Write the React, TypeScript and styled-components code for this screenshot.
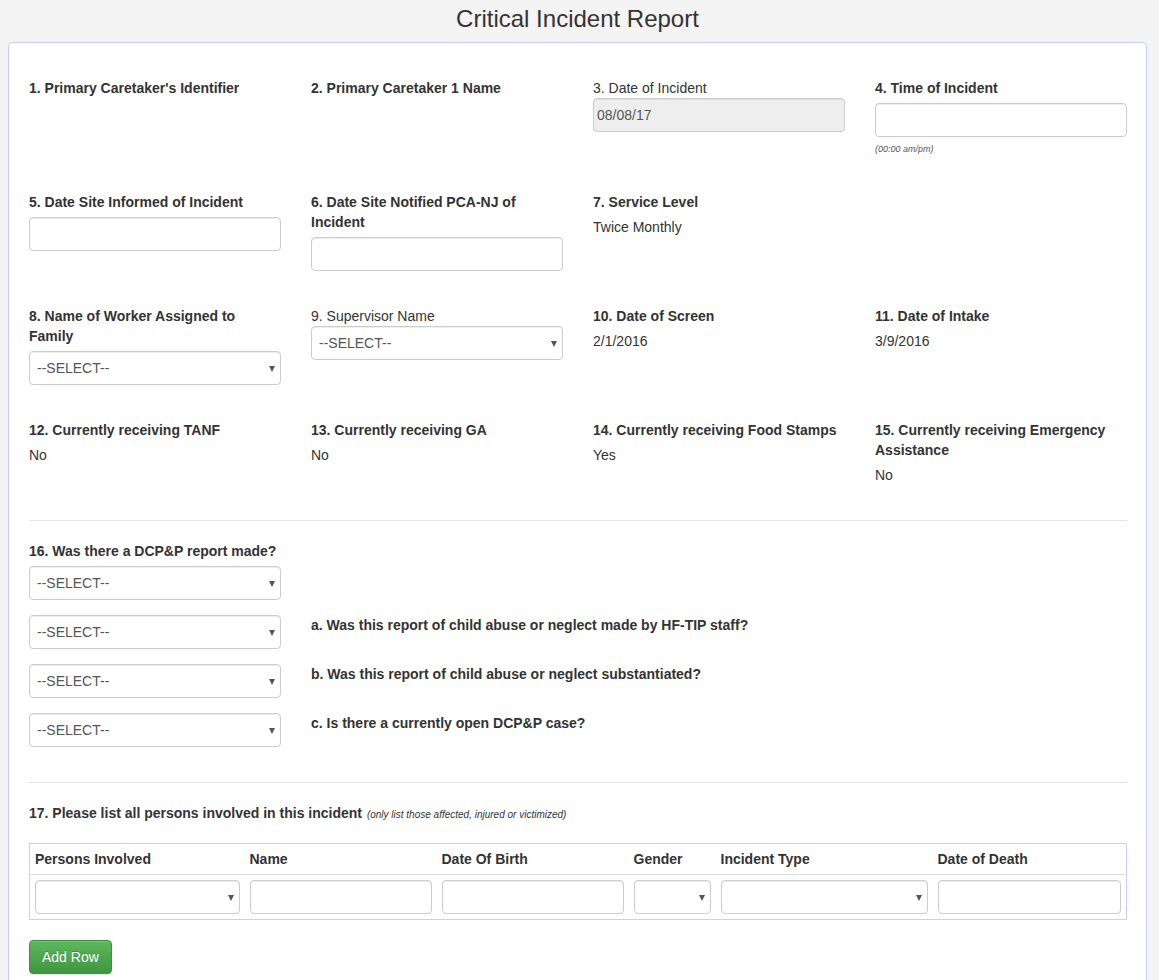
import React from "react";
import styled, { createGlobalStyle } from "styled-components";

const Global = createGlobalStyle`
  html, body { margin: 0; padding: 0; background: #f4f4f4; }
  body { font-family: "Liberation Sans", Arial, sans-serif; font-size: 14px; line-height: 20px; color: #333; }
  * { box-sizing: border-box; }
`;

const Title = styled.h1`
  margin: 0 12px 10px 8px;
  padding-top: 6px;
  font-size: 24px;
  line-height: 26px;
  font-weight: normal;
  text-align: center;
  color: #333;
`;

const Card = styled.div`
  margin: 0 12px 0 8px;
  background: #fff;
  border: 1px solid #ccccff;
  border-radius: 4px;
  padding: 35px 19px 40px 20px;
`;

const Grid = styled.div<{ $gap?: number }>`
  display: grid;
  grid-template-columns: repeat(4, 252px);
  column-gap: 30px;
  row-gap: ${(p) => p.$gap ?? 35}px;
  align-items: start;
`;

const Field = styled.div`
  display: flex;
  flex-direction: column;
  min-height: 79px;
`;

const Label = styled.label<{ $plain?: boolean; $flush?: boolean }>`
  display: block;
  font-weight: ${(p) => (p.$plain ? "normal" : "bold")};
  margin-bottom: ${(p) => (p.$plain || p.$flush ? 0 : 5)}px;
  height: ${(p) => (p.$flush ? "20px" : "auto")};
`;

const Value = styled.div``;

const Input = styled.input<{ $readOnlyStyle?: boolean }>`
  display: block;
  width: 100%;
  height: 34px;
  padding: 6px 3px;
  font-family: inherit;
  font-size: 14px;
  color: #555;
  background: ${(p) => (p.$readOnlyStyle ? "#eee" : "#fff")};
  border: 1px solid #ccc;
  border-radius: 4px;
  box-shadow: inset 0 1px 1px rgba(0, 0, 0, 0.075);
  outline: none;
`;

const SelectWrap = styled.div`
  position: relative;
  width: 100%;
  &::after {
    content: "";
    position: absolute;
    right: 6px;
    top: 15px;
    border-left: 3.5px solid transparent;
    border-right: 3.5px solid transparent;
    border-top: 6px solid #555;
    pointer-events: none;
  }
`;

const Select = styled.select`
  display: block;
  width: 100%;
  height: 34px;
  padding: 6px 20px 6px 7px;
  font-family: inherit;
  font-size: 14px;
  color: #555;
  background: #fff;
  border: 1px solid #ccc;
  border-radius: 4px;
  box-shadow: inset 0 1px 1px rgba(0, 0, 0, 0.075);
  appearance: none;
  -webkit-appearance: none;
  outline: none;
`;

const Help = styled.div`
  margin-top: 5px;
  font-size: 9px;
  line-height: 15px;
  font-style: italic;
  color: #555;
`;

const Rule = styled.hr<{ $top?: number }>`
  border: 0;
  border-top: 1px solid #e4e4e4;
  margin: ${(p) => p.$top ?? 20}px 0 20px;
  height: 0;
`;

const Note = styled.span`
  font-weight: normal;
  font-style: italic;
  font-size: 10px;
  line-height: 10px;
  color: #333;
  margin-left: 1px;
`;

const Spacer = styled.div`
  grid-column: span 3;
`;

const QuestionLabel = styled.div`
  grid-column: span 3;
  font-weight: bold;
  line-height: 20px;
`;

const Table = styled.table`
  width: 100%;
  margin-top: 20px;
  border-collapse: collapse;
  table-layout: fixed;
  border: 1px solid #ccccff;
`;

const Th = styled.th<{ $w?: number }>`
  width: ${(p) => (p.$w ? `${p.$w}px` : "auto")};
  text-align: left;
  padding: 5px;
  font-weight: bold;
  line-height: 20px;
  border-bottom: 1px solid #ddd;
`;

const Td = styled.td`
  padding: 5px;
  vertical-align: top;
`;

const Button = styled.button`
  margin-top: 20px;
  height: 34px;
  padding: 6px 12px;
  font-family: inherit;
  font-size: 14px;
  color: #fff;
  background: linear-gradient(to bottom, #5cb85c 0%, #419641 100%);
  border: 1px solid #3e8f3e;
  border-radius: 4px;
  text-shadow: 0 -1px 0 rgba(0, 0, 0, 0.2);
  box-shadow: inset 0 1px 0 rgba(255, 255, 255, 0.15), 0 1px 1px rgba(0, 0, 0, 0.075);
`;

const Sel = ({ text = "--SELECT--" }: { text?: string }) => (
  <SelectWrap>
    <Select defaultValue="">
      <option value="">{text}</option>
    </Select>
  </SelectWrap>
);

export default function App() {
  return (
    <>
      <Global />
      <Title>Critical Incident Report</Title>
      <Card>
        <Grid>
          <Field>
            <Label>1. Primary Caretaker's Identifier</Label>
          </Field>
          <Field>
            <Label>2. Primary Caretaker 1 Name</Label>
          </Field>
          <Field>
            <Label $plain>3. Date of Incident</Label>
            <Input $readOnlyStyle readOnly defaultValue="08/08/17" />
          </Field>
          <Field>
            <Label>4. Time of Incident</Label>
            <Input />
            <Help>(00:00 am/pm)</Help>
          </Field>

          <Field>
            <Label>5. Date Site Informed of Incident</Label>
            <Input />
          </Field>
          <Field>
            <Label>6. Date Site Notified PCA-NJ of Incident</Label>
            <Input />
          </Field>
          <Field>
            <Label>7. Service Level</Label>
            <Value>Twice Monthly</Value>
          </Field>
          <Field />

          <Field>
            <Label>8. Name of Worker Assigned to Family</Label>
            <Sel />
          </Field>
          <Field>
            <Label $plain>9. Supervisor Name</Label>
            <Sel />
          </Field>
          <Field>
            <Label>10. Date of Screen</Label>
            <Value>2/1/2016</Value>
          </Field>
          <Field>
            <Label>11. Date of Intake</Label>
            <Value>3/9/2016</Value>
          </Field>

          <Field>
            <Label>12. Currently receiving TANF</Label>
            <Value>No</Value>
          </Field>
          <Field>
            <Label>13. Currently receiving GA</Label>
            <Value>No</Value>
          </Field>
          <Field>
            <Label>14. Currently receiving Food Stamps</Label>
            <Value>Yes</Value>
          </Field>
          <Field>
            <Label>15. Currently receiving Emergency Assistance</Label>
            <Value>No</Value>
          </Field>
        </Grid>

        <Rule $top={21} />

        <Label>16. Was there a DCP&amp;P report made?</Label>
        <Grid $gap={15}>
          <Sel />
          <Spacer />
          <Sel />
          <QuestionLabel>a. Was this report of child abuse or neglect made by HF-TIP staff?</QuestionLabel>
          <Sel />
          <QuestionLabel>b. Was this report of child abuse or neglect substantiated?</QuestionLabel>
          <Sel />
          <QuestionLabel>c. Is there a currently open DCP&amp;P case?</QuestionLabel>
        </Grid>

        <Rule $top={35} />

        <Label $flush>
          17. Please list all persons involved in this incident{" "}
          <Note>(only list those affected, injured or victimized)</Note>
        </Label>

        <Table>
          <thead>
            <tr>
              <Th $w={215}>Persons Involved</Th>
              <Th $w={192}>Name</Th>
              <Th $w={192}>Date Of Birth</Th>
              <Th $w={87}>Gender</Th>
              <Th $w={217}>Incident Type</Th>
              <Th>Date of Death</Th>
            </tr>
          </thead>
          <tbody>
            <tr>
              <Td>
                <Sel text="" />
              </Td>
              <Td>
                <Input />
              </Td>
              <Td>
                <Input />
              </Td>
              <Td>
                <Sel text="" />
              </Td>
              <Td>
                <Sel text="" />
              </Td>
              <Td>
                <Input />
              </Td>
            </tr>
          </tbody>
        </Table>

        <Button type="button">Add Row</Button>
      </Card>
    </>
  );
}
